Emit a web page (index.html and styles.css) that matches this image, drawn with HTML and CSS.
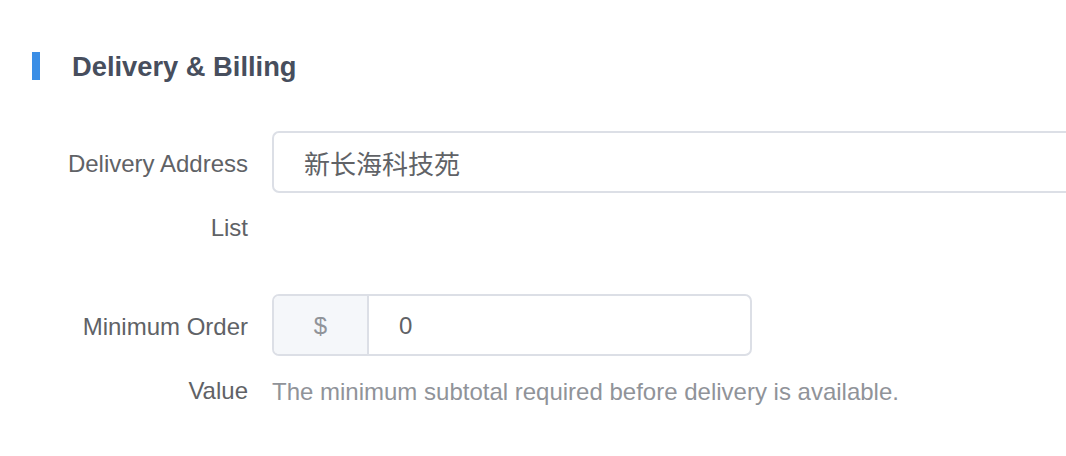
FILE: index.html
```html
<!DOCTYPE html>
<html lang="en">
<head>
<meta charset="utf-8">
<title>Delivery &amp; Billing</title>
<link rel="stylesheet" href="styles.css">
</head>
<body>
<main class="page">
  <h2 class="section-title"><span class="title-bar"></span><span class="title-text">Delivery &amp; Billing</span></h2>
  <form class="form">
    <div class="form-item">
      <label class="form-label">Delivery Address List</label>
      <div class="form-content">
        <div class="input input-wide"><span class="input-value">新长海科技苑</span></div>
      </div>
    </div>
    <div class="form-item">
      <label class="form-label">Minimum Order Value</label>
      <div class="form-content">
        <div class="input input-group">
          <span class="input-prepend">$</span>
          <span class="input-value">0</span>
        </div>
        <p class="form-help">The minimum subtotal required before delivery is available.</p>
      </div>
    </div>
  </form>
</main>
</body>
</html>
```

FILE: styles.css
```css
html, body {
  margin: 0;
  padding: 0;
  background: #ffffff;
  overflow: hidden;
}

body {
  font-family: "Liberation Sans", Arial, "Noto Sans CJK SC", sans-serif;
  color: #606266;
}

.page {
  padding: 52px 0 0 32px;
}

.section-title {
  display: flex;
  align-items: center;
  gap: 32px;
  margin: 0;
  height: 28px;
}

.title-bar {
  width: 8px;
  height: 28px;
  background: #3a8ee6;
}

.title-text {
  font-size: 27.3px;
  font-weight: bold;
  color: #474e5d;
  line-height: 28px;
  padding-top: 2px;
}

.form {
  margin-top: 51px;
  padding-left: 16px;
}

.form-item {
  display: flex;
  align-items: flex-start;
  gap: 24px;
  margin-bottom: 34px;
}

.form-label {
  width: 200px;
  flex: none;
  text-align: right;
  font-size: 24px;
  line-height: 64px;
  color: #606266;
  padding-top: 1px;
}

.form-content {
  flex: 1;
  min-width: 0;
}

.input {
  box-sizing: border-box;
  height: 62px;
  border: 2px solid #dcdfe6;
  border-radius: 7px;
  display: flex;
  align-items: center;
  background: #fff;
}

.input-wide {
  border-right: 0;
  border-radius: 7px 0 0 7px;
}

.input-group {
  width: 480px;
  overflow: hidden;
}

.input-prepend {
  box-sizing: border-box;
  width: 95px;
  height: 100%;
  flex: none;
  display: flex;
  align-items: center;
  justify-content: center;
  background: #f5f7fa;
  border-right: 2px solid #dcdfe6;
  color: #909399;
  font-size: 24px;
  padding-top: 1px;
}

.input-value {
  padding-left: 30px;
  padding-top: 1px;
  font-size: 24px;
  color: #606266;
}

.input-wide .input-value {
  font-size: 26px;
}

.form-help {
  margin: 4px 0 0;
  font-size: 24px;
  line-height: 64px;
  color: #909399;
}
```
